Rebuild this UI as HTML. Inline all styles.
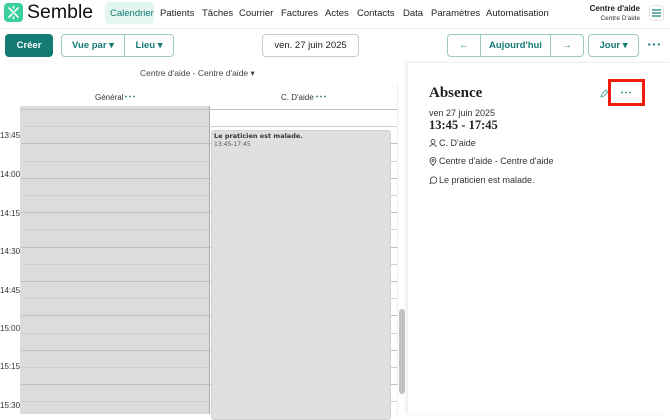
<!DOCTYPE html>
<html><head><meta charset="utf-8"><style>
*{box-sizing:border-box;margin:0;padding:0}
body{width:670px;height:414px;overflow:hidden;background:#fff;font-family:"Liberation Sans",sans-serif;position:relative;color:#222}
.a{position:absolute}
.nav{font-size:9.5px;color:#222;top:8px}
.btn{position:absolute;border:1px solid #9cc9c4;border-radius:4px;color:#137a74;font-weight:bold;font-size:9.5px;display:flex;align-items:center;justify-content:center;background:#fff}
.t{position:absolute;left:0;width:19px;text-align:right;font-size:8px;color:#333}
.hl{position:absolute;left:21px;width:376px;height:1px}
</style></head><body>
<div class="a" style="left:4px;top:3px;width:19px;height:19px;background:#3ccf9e;border-radius:4px"></div>
<svg class="a" style="left:4px;top:3px" width="19" height="19" viewBox="0 0 19 19"><g stroke="#fff" stroke-width="1.6" stroke-linecap="round"><line x1="5" y1="5" x2="14" y2="14"/><line x1="14" y1="5" x2="11" y2="8"/><line x1="5" y1="14" x2="8" y2="11"/><line x1="9.5" y1="3.5" x2="9.5" y2="5"/><line x1="9.5" y1="14" x2="9.5" y2="15.5"/></g></svg>
<div class="a" style="left:27px;top:1px;font-size:19.5px;color:#111">Semble</div>
<div class="a" style="left:105px;top:2px;width:49px;height:22px;background:#e3f6ef;border-radius:4px"></div>
<div class="a nav" style="left:110px;color:#137a74">Calendrier</div>
<div class="a nav" style="left:160px">Patients</div>
<div class="a nav" style="left:202px">Tâches</div>
<div class="a nav" style="left:239px">Courrier</div>
<div class="a nav" style="left:281px">Factures</div>
<div class="a nav" style="left:325px">Actes</div>
<div class="a nav" style="left:357px">Contacts</div>
<div class="a nav" style="left:403px">Data</div>
<div class="a nav" style="left:431px">Paramètres</div>
<div class="a nav" style="left:486px">Automatisation</div>
<div class="a" style="left:580px;top:4px;width:60px;text-align:right;font-size:8px;font-weight:bold">Centre d'aide</div>
<div class="a" style="left:580px;top:15px;width:60px;text-align:right;font-size:6.5px;color:#333">Centre D'aide</div>
<div class="a" style="left:649px;top:5px;width:15px;height:16px;border:1px solid #e6e6e6;border-radius:3px"></div>
<svg class="a" style="left:652px;top:9px" width="9" height="8"><g stroke="#137a74" stroke-width="1.2"><line x1="0" y1="1" x2="9" y2="1"/><line x1="0" y1="4" x2="9" y2="4"/><line x1="0" y1="7" x2="9" y2="7"/></g></svg>
<div class="a" style="left:0;top:28px;width:670px;height:1px;background:#f2f2f2"></div>
<div class="btn" style="left:5px;top:34px;width:48px;height:23px;background:#137a74;border-color:#137a74;color:#fff">Créer</div>
<div class="btn" style="left:61px;top:34px;width:64px;height:23px;border-radius:4px 0 0 4px">Vue par ▾</div>
<div class="btn" style="left:124px;top:34px;width:50px;height:23px;border-radius:0 4px 4px 0">Lieu ▾</div>
<div class="btn" style="left:262px;top:34px;width:97px;height:23px;border-color:#ccc;color:#222;font-weight:normal">ven. 27 juin 2025</div>
<div class="btn" style="left:447px;top:34px;width:34px;height:23px;border-radius:4px 0 0 4px">←</div>
<div class="btn" style="left:480px;top:34px;width:71px;height:23px;border-radius:0">Aujourd'hui</div>
<div class="btn" style="left:550px;top:34px;width:34px;height:23px;border-radius:0 4px 4px 0">→</div>
<div class="btn" style="left:588px;top:34px;width:51px;height:23px">Jour ▾</div>
<svg class="a" style="left:648px;top:43px" width="12" height="3"><g fill="#137a74"><circle cx="1.2" cy="1.5" r="1.1"/><circle cx="6" cy="1.5" r="1.1"/><circle cx="10.8" cy="1.5" r="1.1"/></g></svg>
<div class="a" style="left:140px;top:68px;font-size:8.5px;color:#444">Centre d'aide - Centre d'aide ▾</div>
<div class="a" style="left:95px;top:93px;font-size:8px;color:#333">Général</div>
<svg class="a" style="left:125px;top:95px" width="10" height="3"><g fill="#137a74"><circle cx="1" cy="1.5" r=".9"/><circle cx="5" cy="1.5" r=".9"/><circle cx="9" cy="1.5" r=".9"/></g></svg>
<div class="a" style="left:281px;top:93px;font-size:8px;color:#333">C. D'aide</div>
<svg class="a" style="left:316px;top:95px" width="10" height="3"><g fill="#137a74"><circle cx="1" cy="1.5" r=".9"/><circle cx="5" cy="1.5" r=".9"/><circle cx="9" cy="1.5" r=".9"/></g></svg>
<div class="a" style="left:21px;top:106px;width:188px;height:308px;background:#dcdcdc"></div>
<div class="a" style="left:209px;top:106px;width:1px;height:308px;background:#aaa"></div>
<div class="a" style="left:397px;top:84px;width:1px;height:330px;background:#eee"></div>
<div class="a" style="left:20px;top:106px;width:1px;height:308px;background:#ddd"></div>
<div id="g"></div>
<div class="a" style="left:211px;top:130px;width:180px;height:290px;background:#e0e0e0;border-radius:3px;border:1px solid #d2d2d2"></div>
<div class="a" style="left:214px;top:132px;font-size:6.5px;font-weight:bold;font-family:'DejaVu Sans',sans-serif;color:#333">Le praticien est malade.</div>
<div class="a" style="left:214px;top:141px;font-size:6px;font-family:'DejaVu Sans',sans-serif;color:#555">13:45-17:45</div>
<div class="t" style="top:131px">13:45</div>
<div class="t" style="top:170px">14:00</div>
<div class="t" style="top:209px">14:15</div>
<div class="t" style="top:247px">14:30</div>
<div class="t" style="top:286px">14:45</div>
<div class="t" style="top:324px">15:00</div>
<div class="t" style="top:362px">15:15</div>
<div class="t" style="top:401px">15:30</div>
<div class="a" style="left:399px;top:309px;width:6px;height:85px;background:#c2c2c2;border-radius:3px"></div>
<div class="a" style="left:407px;top:62px;width:263px;height:352px;background:#fff;border-left:1px solid #eee;border-top:1px solid #eee;box-shadow:-2px 0 4px rgba(0,0,0,.05)"></div>
<div class="a" style="left:429px;top:85px;font-family:'Liberation Serif',serif;font-weight:bold;font-size:15px;color:#222">Absence</div>
<svg class="a" style="left:600px;top:89px" width="9" height="9"><path d="M1 8 L2 5 L6 1 L8 3 L4 7 Z" fill="none" stroke="#5aa" stroke-width="1"/></svg>
<div class="a" style="left:608px;top:79px;width:37px;height:27px;border:3px solid #f01c10"></div>
<svg class="a" style="left:621px;top:91px" width="10" height="3"><g fill="#137a74"><circle cx="1" cy="1.5" r=".9"/><circle cx="5" cy="1.5" r=".9"/><circle cx="9" cy="1.5" r=".9"/></g></svg>
<div class="a" style="left:429px;top:108px;font-size:9px;color:#333">ven 27 juin 2025</div>
<div class="a" style="left:429px;top:118px;font-family:'Liberation Serif',serif;font-weight:bold;font-size:12.5px">13:45 - 17:45</div>
<svg class="a" style="left:429px;top:139px" width="8" height="8"><circle cx="4" cy="2.5" r="2" fill="none" stroke="#333" stroke-width=".8"/><path d="M0.5 8 Q4 3 7.5 8" fill="none" stroke="#333" stroke-width=".8"/></svg>
<div class="a" style="left:439px;top:138px;font-size:9px;color:#333">C. D'aide</div>
<svg class="a" style="left:429px;top:157px" width="8" height="9"><path d="M4 8.5 C1 5 1 4 1 3.5 A3 3 0 0 1 7 3.5 C7 4 7 5 4 8.5Z" fill="none" stroke="#333" stroke-width=".8"/><circle cx="4" cy="3.5" r="1" fill="none" stroke="#333" stroke-width=".7"/></svg>
<div class="a" style="left:439px;top:156px;font-size:9px;color:#333">Centre d'aide - Centre d'aide</div>
<svg class="a" style="left:429px;top:176px" width="8" height="8"><path d="M1 7.5 L1.8 5.5 A3.2 3.2 0 1 1 3 6.8 Z" fill="none" stroke="#333" stroke-width=".8"/></svg>
<div class="a" style="left:439px;top:175px;font-size:9px;color:#333">Le praticien est malade.</div>
<script>
var g=document.getElementById('g'),h='';
for(var i=0;i<18;i++){var y=109+i*17.2;h+='<div class="hl" style="top:'+y+'px;background:'+(i%2? '#d0d0d0':'#bcc1c5')+'"></div>';}
g.innerHTML=h;
</script>
</body></html>
